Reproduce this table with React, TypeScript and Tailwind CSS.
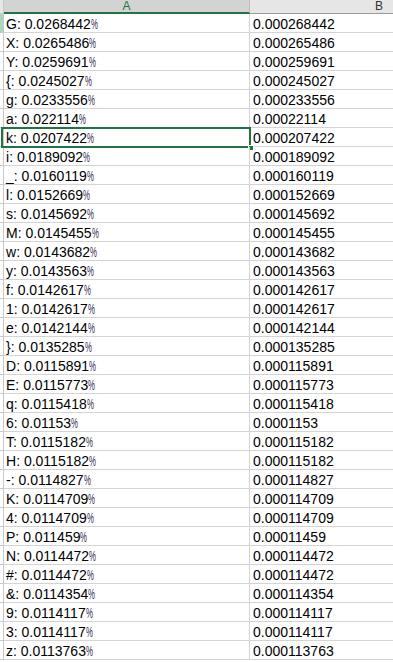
import React from "react";

const rows: [string, string, string][] = [
  ["G", "0.0268442", "0.000268442"],
  ["X", "0.0265486", "0.000265486"],
  ["Y", "0.0259691", "0.000259691"],
  ["{", "0.0245027", "0.000245027"],
  ["g", "0.0233556", "0.000233556"],
  ["a", "0.022114", "0.00022114"],
  ["k", "0.0207422", "0.000207422"],
  ["i", "0.0189092", "0.000189092"],
  ["_", "0.0160119", "0.000160119"],
  ["l", "0.0152669", "0.000152669"],
  ["s", "0.0145692", "0.000145692"],
  ["M", "0.0145455", "0.000145455"],
  ["w", "0.0143682", "0.000143682"],
  ["y", "0.0143563", "0.000143563"],
  ["f", "0.0142617", "0.000142617"],
  ["1", "0.0142617", "0.000142617"],
  ["e", "0.0142144", "0.000142144"],
  ["}", "0.0135285", "0.000135285"],
  ["D", "0.0115891", "0.000115891"],
  ["E", "0.0115773", "0.000115773"],
  ["q", "0.0115418", "0.000115418"],
  ["6", "0.01153", "0.0001153"],
  ["T", "0.0115182", "0.000115182"],
  ["H", "0.0115182", "0.000115182"],
  ["-", "0.0114827", "0.000114827"],
  ["K", "0.0114709", "0.000114709"],
  ["4", "0.0114709", "0.000114709"],
  ["P", "0.011459", "0.00011459"],
  ["N", "0.0114472", "0.000114472"],
  ["#", "0.0114472", "0.000114472"],
  ["&", "0.0114354", "0.000114354"],
  ["9", "0.0114117", "0.000114117"],
  ["3", "0.0114117", "0.000114117"],
  ["z", "0.0113763", "0.000113763"],
];

export default function App() {
  return (
    <div
      className="w-[393px] h-[662px] overflow-hidden bg-white text-black"
      style={{ fontFamily: '"Liberation Sans", Arial, sans-serif' }}
    >
      <div className="flex h-[14px] w-[520px]">
        <div className="w-[4px] h-[14px] bg-[#e6e6e6] border-r border-b border-[#c6c6c6]" />
        <div className="w-[246px] h-[14px] bg-[#d3d3d3] border-r border-[#bdbdbd] border-b-2 border-b-[#217346] flex justify-center">
          <span className="text-[12px] leading-[12px] text-[#217346]">A</span>
        </div>
        <div className="w-[258px] h-[14px] bg-[#e6e6e6] border-b border-[#9b9b9b] flex justify-center">
          <span className="text-[12px] leading-[12px] text-[#333]">B</span>
        </div>
      </div>
      {rows.map(([k, v, b], i) => (
        <div key={i} className="flex h-[19px] w-[520px]">
          <div
            className={`w-[4px] h-[19px] border-r border-b border-[#c8c8c8] ${
              i === 0 ? "bg-[#a6d8bb]" : "bg-white"
            }`}
          />
          <div className="relative w-[246px] h-[19px] border-r border-b border-[#d4d4d4] pl-[2px] flex items-end">
            <span className="text-[14px] leading-[16px] whitespace-nowrap">
              {k}: {v}
              <span className="inline-block w-[7px] overflow-visible">
                <span className="inline-block origin-left scale-x-[0.56] text-[#3a3050]">%</span>
              </span>
            </span>
            {i === 6 && (
              <div className="absolute top-[-1px] left-[-3px] right-[-2px] bottom-[-2px] border-2 border-[#217346]">
                <div className="absolute right-[-5px] bottom-[-5px] w-[6px] h-[6px] bg-[#217346] border border-white" />
              </div>
            )}
          </div>
          <div className="w-[258px] h-[19px] border-b border-[#d4d4d4] pl-[3px] flex items-end">
            <span className="text-[14px] leading-[16px] whitespace-nowrap">{b}</span>
          </div>
        </div>
      ))}
    </div>
  );
}
